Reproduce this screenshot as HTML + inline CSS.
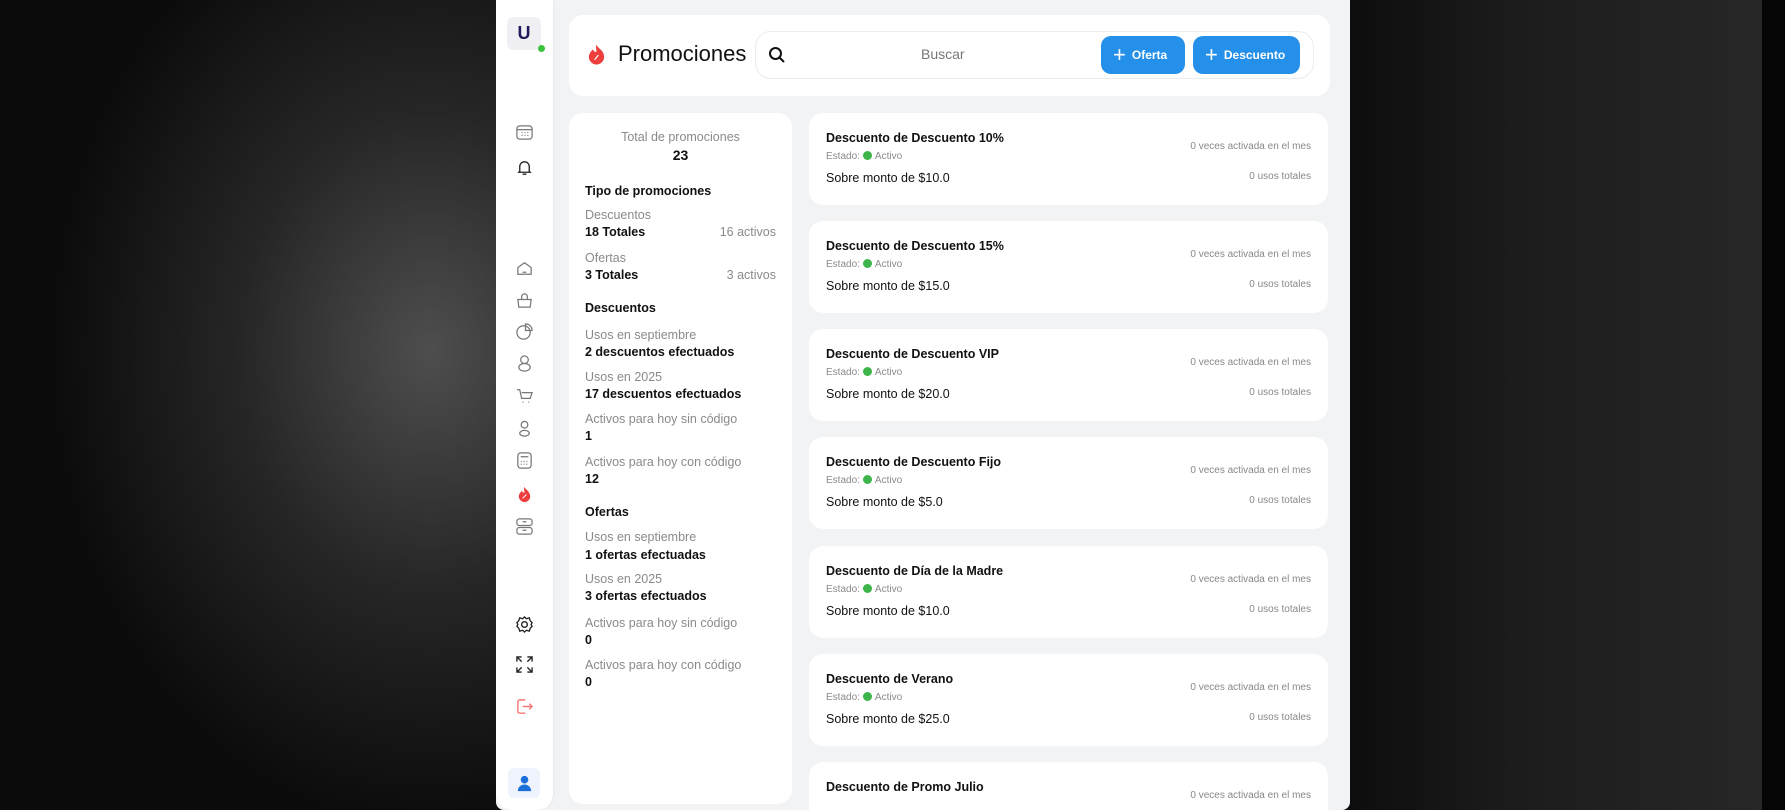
<!DOCTYPE html>
<html><head><meta charset="utf-8"><style>
*{box-sizing:border-box;margin:0;padding:0}
html,body{width:1785px;height:810px;overflow:hidden}
body{font-family:"Liberation Sans",sans-serif;position:relative;
background:radial-gradient(ellipse 380px 480px at 430px 350px,#4e4e4e 0%,#262626 50%,#0b0b0b 100%);}
.rbg{position:absolute;left:1350px;top:0;width:412px;height:810px;background:linear-gradient(90deg,#0d0d0d,#1c1c1c 40%,#272727);}
.rbg2{position:absolute;left:1762px;top:0;width:23px;height:810px;background:#050505}
.frame{position:absolute;left:496px;top:0;width:854px;height:810px;background:#f2f3f5;border-radius:0 0 8px 8px;overflow:hidden}
.side{position:absolute;left:0;top:0;width:57px;height:810px;background:#fff;border-radius:0 0 16px 16px;box-shadow:1px 0 2px rgba(0,0,0,.05)}
.av{position:absolute;left:11px;top:17px;width:34px;height:33px;background:#f0f0f4;border-radius:6px;color:#1f1a5a;font-weight:bold;font-size:18px;text-align:center;line-height:33px}
.dot{position:absolute;left:42px;top:45px;width:7px;height:7px;border-radius:50%;background:#3cc13b}
.ic{position:absolute;left:19px;width:19px;height:19px}
.card{position:absolute;background:#fff;border-radius:14px}
.hdr{left:73px;top:15px;width:761px;height:81px}
.title{position:absolute;left:49px;top:26px;font-size:22px;color:#111}
.search{position:absolute;left:186px;top:16px;width:559px;height:48px;border:1px solid #ececec;border-radius:16px}
.btn{position:absolute;top:4px;height:38px;background:#2490ea;border-radius:10px;color:#fff;font-weight:bold;font-size:12px;line-height:38px}
.btn span.p{font-size:22px;font-weight:normal;vertical-align:-3px;margin-right:6px}
.left{left:73px;top:113px;width:223px;height:691px;font-size:12.5px}
.left div{position:absolute;left:16px;white-space:nowrap}
.g{color:#8a8a8a}.b{font-weight:bold;color:#111}
.r{right:16px;left:auto!important}
.pc{left:313px;width:519px;height:92px}
.pc .t{position:absolute;left:17px;top:18px;font-weight:bold;font-size:12.5px;color:#111}
.pc .e{position:absolute;left:17px;top:38px;font-size:10px;color:#8a8a8a}
.pc .e i{display:inline-block;width:9px;height:9px;border-radius:50%;background:#3db54a;vertical-align:-1px;margin:0 3px}
.pc .s{position:absolute;left:17px;top:58px;font-size:12.5px;color:#111}
.pc .v{position:absolute;right:17px;top:28px;font-size:10px;color:#888}
.pc .u{position:absolute;right:17px;top:58px;font-size:10px;color:#888}
</style></head><body>
<div class="rbg"></div><div class="rbg2"></div>
<div class="frame">
 <div class="side">
  <div class="av">U</div><div class="dot"></div>
  <svg class="ic" style="top:123px" viewBox="0 0 20 20" fill="none" stroke="#777" stroke-width="1.3"><rect x="2" y="3" width="16" height="14" rx="3"/><path d="M2 7h16M7 10h1M10 10h1M13 10h1M7 13h1M10 13h1M13 13h1"/></svg>
  <svg class="ic" style="top:158px" viewBox="0 0 20 20" fill="none" stroke="#222" stroke-width="1.4"><path d="M5 14V9a5 5 0 0 1 10 0v5l1 1H4z M8 17h4"/></svg>
  <svg class="ic" style="top:259px" viewBox="0 0 20 20" fill="none" stroke="#777" stroke-width="1.3"><path d="M3 9l7-5 7 5v7H3z M8 14h4"/></svg>
  <svg class="ic" style="top:291px" viewBox="0 0 20 20" fill="none" stroke="#777" stroke-width="1.3"><path d="M3 9h14l-1 8H4z M7 9V6a3 3 0 0 1 6 0v3"/></svg>
  <svg class="ic" style="top:322px" viewBox="0 0 20 20" fill="none" stroke="#777" stroke-width="1.3"><circle cx="9" cy="11" r="7"/><path d="M11 2v7h7a7 7 0 0 0-7-7z"/></svg>
  <svg class="ic" style="top:354px" viewBox="0 0 20 20" fill="none" stroke="#777" stroke-width="1.3"><circle cx="10" cy="6" r="4"/><ellipse cx="10" cy="14" rx="6" ry="4"/></svg>
  <svg class="ic" style="top:386px" viewBox="0 0 20 20" fill="none" stroke="#777" stroke-width="1.3"><path d="M2 4h3l2 9h9l2-6H7 M8 17h1M14 17h1"/></svg>
  <svg class="ic" style="top:419px" viewBox="0 0 20 20" fill="none" stroke="#777" stroke-width="1.3"><circle cx="10" cy="6" r="3.5"/><ellipse cx="10" cy="15" rx="5" ry="3"/></svg>
  <svg class="ic" style="top:451px" viewBox="0 0 20 20" fill="none" stroke="#777" stroke-width="1.3"><rect x="3" y="2" width="14" height="16" rx="3"/><path d="M6 6h8M6 11h1M9 11h1M12 11h1M6 14h1M9 14h1M12 14h1"/></svg>
  <svg class="ic" style="top:485px" viewBox="0 0 20 20"><path d="M10 2c1 3 6 5 6 10a6 6 0 0 1-12 0c0-3 2-4 3-6 1 2 2 2 3 2 0-2-1-4 0-6z" fill="#ee3d3d"/><path d="M8 14l4-4M8 10h.1M12 14h.1" stroke="#fff" stroke-width="1"/></svg>
  <svg class="ic" style="top:517px" viewBox="0 0 20 20" fill="none" stroke="#777" stroke-width="1.3"><rect x="2" y="2" width="16" height="7" rx="2.5"/><rect x="2" y="11" width="16" height="7" rx="2.5"/><path d="M8 5h4M8 14h4"/></svg>
  <svg class="ic" style="top:615px" viewBox="0 0 20 20" fill="none" stroke="#222" stroke-width="1.4"><circle cx="10" cy="10" r="3"/><path d="M10 2l2 2 3-1 1 3 2 2-1 2 1 2-2 2-1 3-3-1-2 2-2-2-3 1-1-3-2-2 1-2-1-2 2-2 1-3 3 1z"/></svg>
  <svg class="ic" style="top:655px" viewBox="0 0 20 20" fill="none" stroke="#222" stroke-width="1.4"><path d="M2 7V2h5M2 2l5 5M18 7V2h-5M18 2l-5 5M2 13v5h5M2 18l5-5M18 13v5h-5M18 18l-5-5"/></svg>
  <svg class="ic" style="top:697px" viewBox="0 0 20 20" fill="none" stroke="#f07a7a" stroke-width="1.5"><path d="M11 3H5a2 2 0 0 0-2 2v10a2 2 0 0 0 2 2h6M8 10h10M15 7l3 3-3 3"/></svg>
  <div style="position:absolute;left:12px;top:768px;width:32px;height:30px;background:#eef3fc;border-radius:6px"></div>
  <svg class="ic" style="top:774px" viewBox="0 0 20 20" fill="#1b6fd8"><circle cx="10" cy="6" r="4"/><path d="M3 18a7 7 0 0 1 14 0z"/></svg>
 </div>
 <div class="card hdr">
  <svg style="position:absolute;left:18px;top:28px" width="19" height="24" viewBox="0 0 20 24"><path d="M10 1c1 4 8 6 8 13a8 8 0 0 1-16 0c0-4 3-6 4-8 1 2 2 3 4 3 0-3-1-5 0-8z" fill="#ee3d3d"/><path d="M8 17l4-5M8 12h.1M12 17h.1" stroke="#fff" stroke-width="1.2"/></svg>
  <div class="title">Promociones</div>
  <div class="search">
   <svg style="position:absolute;left:12px;top:14px" width="18" height="18" viewBox="0 0 18 18" fill="none" stroke="#111" stroke-width="2"><circle cx="7.5" cy="7.5" r="5.5"/><path d="M11.5 11.5l4.5 4.5"/></svg>
   <div style="position:absolute;left:165px;top:14px;font-size:14px;color:#777">Buscar</div>
   <div class="btn" style="left:345px;width:84px;padding-left:12px"><span class="p">+</span>Oferta</div>
   <div class="btn" style="left:437px;width:107px;padding-left:12px"><span class="p">+</span>Descuento</div>
  </div>
 </div>
 <div class="card left">
  <div class="g" style="left:0;width:223px;text-align:center;top:17px">Total de promociones</div>
  <div class="b" style="left:0;width:223px;text-align:center;top:34px;font-size:14px">23</div>
  <div class="b" style="top:71px">Tipo de promociones</div>
  <div class="g" style="top:95px">Descuentos</div>
  <div class="b" style="top:112px">18 Totales</div><div class="g r" style="top:112px">16 activos</div>
  <div class="g" style="top:138px">Ofertas</div>
  <div class="b" style="top:155px">3 Totales</div><div class="g r" style="top:155px">3 activos</div>
  <div class="b" style="top:188px">Descuentos</div>
  <div class="g" style="top:215px">Usos en septiembre</div>
  <div class="b" style="top:232px">2 descuentos efectuados</div>
  <div class="g" style="top:257px">Usos en 2025</div>
  <div class="b" style="top:274px">17 descuentos efectuados</div>
  <div class="g" style="top:299px">Activos para hoy sin código</div>
  <div class="b" style="top:316px">1</div>
  <div class="g" style="top:342px">Activos para hoy con código</div>
  <div class="b" style="top:359px">12</div>
  <div class="b" style="top:392px">Ofertas</div>
  <div class="g" style="top:417px">Usos en septiembre</div>
  <div class="b" style="top:435px">1 ofertas efectuadas</div>
  <div class="g" style="top:459px">Usos en 2025</div>
  <div class="b" style="top:476px">3 ofertas efectuados</div>
  <div class="g" style="top:503px">Activos para hoy sin código</div>
  <div class="b" style="top:520px">0</div>
  <div class="g" style="top:545px">Activos para hoy con código</div>
  <div class="b" style="top:562px">0</div>
 </div>
 <div class="card pc" style="top:113px"><div class="t">Descuento de Descuento 10%</div><div class="e">Estado:<i></i>Activo</div><div class="s">Sobre monto de $10.0</div><div class="v">0 veces activada en el mes</div><div class="u">0 usos totales</div></div>
 <div class="card pc" style="top:221px"><div class="t">Descuento de Descuento 15%</div><div class="e">Estado:<i></i>Activo</div><div class="s">Sobre monto de $15.0</div><div class="v">0 veces activada en el mes</div><div class="u">0 usos totales</div></div>
 <div class="card pc" style="top:329px"><div class="t">Descuento de Descuento VIP</div><div class="e">Estado:<i></i>Activo</div><div class="s">Sobre monto de $20.0</div><div class="v">0 veces activada en el mes</div><div class="u">0 usos totales</div></div>
 <div class="card pc" style="top:437px"><div class="t">Descuento de Descuento Fijo</div><div class="e">Estado:<i></i>Activo</div><div class="s">Sobre monto de $5.0</div><div class="v">0 veces activada en el mes</div><div class="u">0 usos totales</div></div>
 <div class="card pc" style="top:546px"><div class="t">Descuento de Día de la Madre</div><div class="e">Estado:<i></i>Activo</div><div class="s">Sobre monto de $10.0</div><div class="v">0 veces activada en el mes</div><div class="u">0 usos totales</div></div>
 <div class="card pc" style="top:654px"><div class="t">Descuento de Verano</div><div class="e">Estado:<i></i>Activo</div><div class="s">Sobre monto de $25.0</div><div class="v">0 veces activada en el mes</div><div class="u">0 usos totales</div></div>
 <div class="card pc" style="top:762px;height:48px;border-radius:14px 14px 0 0"><div class="t">Descuento de Promo Julio</div><div class="v">0 veces activada en el mes</div></div>
</div>
</body></html>
